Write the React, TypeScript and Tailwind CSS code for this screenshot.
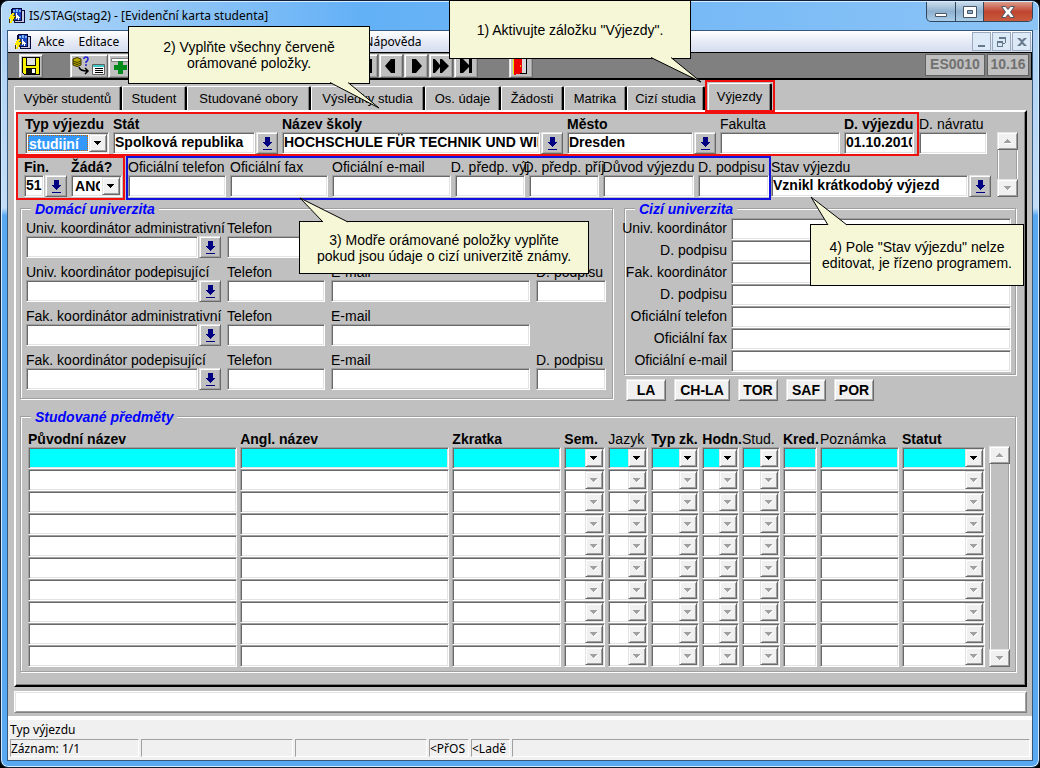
import { ReactNode, useId } from 'react'
import clsx from 'clsx'

const SUNKEN =
    'border border-t-[#a0a0a0] border-l-[#a0a0a0] border-r-white border-b-white shadow-[inset_1px_1px_#696969,inset_-1px_-1px_#e3e3e3]'
const RAISED =
    'border border-t-[#e3e3e3] border-l-[#e3e3e3] border-r-[#696969] border-b-[#696969] shadow-[inset_1px_1px_#ffffff,inset_-1px_-1px_#a0a0a0]'
const GROUP =
    'relative border border-[#a0a0a0] shadow-[inset_1px_1px_#ffffff,1px_1px_#ffffff]'

const AppIcon = () => (
    <svg viewBox="0 0 16 16" className="size-4 shrink-0" shapeRendering="crispEdges">
        <path d="M3 0h10v2h3v13H5v-2H2V1z" fill="#08083c" />
        <path d="M13 3h2v11H6v-1h7z" fill="#c4cce4" />
        <path d="M4 1h8v11H4z" fill="#1c48c0" />
        <path d="M4 2h2v2H4zM7 1h2v3H7zM10 2h2v2h-2z" fill="#7cb4ff" />
        <path d="M7 5v6h1v-1h1v2h1v-2h1V9h-1V8H9V7H8V5z" fill="#ffffff" />
        <path d="M3 5h2v2H4v1h2v1H5v2H4v2H3v2H1v-2h1v-2H0V9h1V7h1z" fill="#ffe800" />
        <path d="M5 5h1v3H5zM0 11h1v4H0zM6 8h1v2H6v1H5v2H4v-2h1V9h1z" fill="#4a3c00" />
    </svg>
)

const DownIcon = () => (
    <svg viewBox="0 0 10 13" className="h-[13px] w-[10px]" shapeRendering="crispEdges">
        <path d="M3 0h5v5h2v1H9v1H8v1H7v1H6v1H5V9H4V8H3V7H2V6H1V5h2z" fill="#000080" />
        <path d="M1 12h9v1H1z" fill="#000080" />
    </svg>
)

const Triangle = ({ up, muted }: { up?: boolean; muted?: boolean }) => (
    <svg viewBox="0 0 8 5" className="h-[5px] w-2" shapeRendering="crispEdges">
        {muted && <path d={up ? 'M1 4h7v1H1z' : 'M4 4h1V3h1V2h1V1h1v1H7v1H6v1H5v1H4z'} fill="#fff" />}
        <path
            d={up ? 'M3 0h1v1h1v1h1v1h1v1H0V3h1V2h1V1h1z' : 'M0 0h7v1H6v1H5v1H4v1H3V3H2V2H1V1H0z'}
            fill={muted ? '#a0a0a0' : '#000'}
        />
    </svg>
)

interface IField {
    label: string
    value?: string
    lov?: boolean
    bold?: boolean
    center?: boolean
    className?: string
}

const Field = ({ label, value = '', lov, bold, center, className }: IField) => {
    const id = useId()
    return (
        <div className={clsx('flex min-w-0 flex-col', center && 'items-center', className)}>
            <label
                htmlFor={id}
                className={clsx('h-4 text-sm leading-4 whitespace-nowrap', bold && 'font-bold')}
            >
                {label}
            </label>
            <div className="flex w-full gap-px">
                <input
                    id={id}
                    defaultValue={value}
                    className={clsx(
                        SUNKEN,
                        'h-[22px] w-full min-w-0 flex-1 bg-white px-px pb-0.5 text-sm font-bold outline-none'
                    )}
                />
                {lov && (
                    <button
                        type="button"
                        aria-label={label}
                        className={clsx(
                            RAISED,
                            'flex h-[22px] w-[22px] shrink-0 items-center justify-center bg-[#c0c0c0]'
                        )}
                    >
                        <DownIcon />
                    </button>
                )}
            </div>
        </div>
    )
}

interface ICombo {
    id?: string
    name: string
    value?: string
    active?: boolean
    selected?: boolean
    disabled?: boolean
}

const Combo = ({ id, name, value = '', active, selected, disabled }: ICombo) => (
    <div className={clsx(SUNKEN, 'flex h-[22px] w-full p-px', active ? 'bg-[#00ffff]' : 'bg-white')}>
        <div className={clsx('flex min-w-0 flex-1', selected && 'p-px')}>
            <select
                id={id}
                aria-label={name}
                disabled={disabled}
                className={clsx(
                    'h-full w-full min-w-0 appearance-none text-sm leading-4 font-bold outline-none',
                    selected
                        ? 'border border-dotted border-[#c06000] bg-[#3399ff] text-white'
                        : 'bg-transparent px-0.5'
                )}
            >
                <option>{value}</option>
            </select>
        </div>
        <span
            className={clsx(
                RAISED,
                'pointer-events-none flex w-[18px] shrink-0 items-center justify-center bg-[#f0f0f0]'
            )}
        >
            <Triangle muted={disabled} />
        </span>
    </div>
)

const ComboField = ({ label, value, selected, className }: IField & { selected?: boolean }) => {
    const id = useId()
    return (
        <div className={className}>
            <label htmlFor={id} className="block h-4 text-sm leading-4 font-bold whitespace-nowrap">
                {label}
            </label>
            <Combo id={id} name={label} value={value} selected={selected} />
        </div>
    )
}

const ScrollBar = ({ className }: { className?: string }) => (
    <div className={clsx('flex w-[21px] shrink-0 flex-col', className)}>
        <button
            type="button"
            aria-label="▲"
            className={clsx(RAISED, 'flex h-[18px] items-center justify-center bg-[#f0f0f0]')}
        >
            <Triangle up muted />
        </button>
        <div className="flex-1 border-x border-l-[#a0a0a0] border-r-white bg-[#c0c0c0] shadow-[inset_1px_0_#ffffff,inset_-1px_0_#a0a0a0]"></div>
        <button
            type="button"
            aria-label="▼"
            className={clsx(RAISED, 'flex h-[18px] items-center justify-center bg-[#f0f0f0]')}
        >
            <Triangle muted />
        </button>
    </div>
)

const Legend = ({ children }: { children: ReactNode }) => (
    <h2 className="absolute -top-2 left-2.5 bg-[#c0c0c0] px-1 text-sm leading-4 font-bold text-[#0000ff] italic">
        {children}
    </h2>
)

interface ICallout {
    className: string
    tail: string
    children: ReactNode
}

const Callout = ({ className, tail, children }: ICallout) => (
    <div
        className={clsx(
            'absolute z-10 flex items-center justify-center border border-black bg-[#f6f7d6] text-center text-sm leading-4',
            className
        )}
    >
        <p className="whitespace-pre-line">{children}</p>
        <svg className="absolute -top-px -left-px overflow-visible" width="1" height="1">
            <polyline points={tail} fill="#f6f7d6" stroke="#000" strokeWidth="1" />
        </svg>
    </div>
)

const ToolButton = ({ name, className, children }: { name: string; className?: string; children: ReactNode }) => (
    <button
        type="button"
        aria-label={name}
        className={clsx(
            RAISED,
            'flex h-6 shrink-0 items-center justify-center bg-[#c0c0c0]',
            className ?? 'w-6'
        )}
    >
        {children}
    </button>
)

const NAV_ICONS = [
    { name: 'První', d: 'M3 2h3v6l6-6h3v14h-3l-6-6v6H3z' },
    { name: 'Předchozí', d: 'M3 9l6-7h4v14H9z' },
    { name: 'Další', d: 'M15 9L9 2H5v14h4z' },
    { name: 'Vpřed', d: 'M1 2h2l5 6V2h2l7 7-7 7H8v-6l-5 6H1z' },
    { name: 'Poslední', d: 'M3 2h3l6 6V2h3v14h-3v-6l-6 6H3z' },
]

const ToolBar = () => (
    <div className="flex h-7 items-start border-t border-r border-b-2 border-black bg-[#808080] pt-px pr-0.5 pl-[11px]">
        <ToolButton name="Uložit">
            <svg viewBox="0 0 18 18" className="size-[18px]" shapeRendering="crispEdges">
                <path d="M0 0h18v18H2l-2-2z" fill="#000" />
                <path d="M1 1h16v16H2l-1-1z" fill="#f8f000" />
                <path d="M4 1h10v8H4z" fill="#000" />
                <path d="M5 1h8v7H5z" fill="#e0e0e0" />
                <path d="M4 11h10v6H4z" fill="#101010" />
                <path d="M10 12h3v4h-3z" fill="#fff" />
            </svg>
        </ToolButton>
        <ToolButton name="Dotaz" className="ml-[27px] w-[38px]">
            <svg viewBox="0 0 34 20" className="h-5 w-[34px] shrink-0">
                <path d="M1 3q4-3 8 0v6q-4 3-8 0z" fill="#b8a800" stroke="#403800" />
                <path d="M1 5q4 3 8 0M1 7q4 3 8 0" fill="none" stroke="#403800" />
                <path d="M12 3q0-2 2-2t2 2-2 3v1M14 8v2" fill="none" stroke="#2020d8" strokeWidth="1.5" />
                <path d="M7 11q1 4 8 4M13 12l3 3-3 3" fill="none" stroke="#000" strokeWidth="1.5" />
                <path d="M20.500 8.500h12v10h-12z" fill="#fff" stroke="#606060" />
                <path d="M21 9h11v2H21z" fill="#40c8c8" />
                <path d="M23 12.500h8M23 14.500h8M23 16.500h8" stroke="#000" />
            </svg>
        </ToolButton>
        <ToolButton name="Vložit" className="w-[38px]">
            <svg viewBox="0 0 34 20" className="h-5 w-[34px] shrink-0">
                <path d="M1.500 2.500h20v3h-20z" fill="#fff" stroke="#808080" />
                <path d="M8 5h5v4h4v5h-4v4H8v-4H4V9h4z" fill="#008a1c" />
            </svg>
        </ToolButton>
        <div className="ml-52 flex gap-px">
            {NAV_ICONS.map((icon) => (
                <ToolButton key={icon.name} name={icon.name}>
                    <svg viewBox="0 0 18 18" className="size-[18px]">
                        <path d={icon.d} fill="#000" />
                    </svg>
                </ToolButton>
            ))}
        </div>
        <ToolButton name="Konec" className="ml-[31px] w-6">
            <svg viewBox="0 0 18 20" className="h-5 w-[18px]" shapeRendering="crispEdges">
                <path d="M2 1h13v17H2z" fill="#000" />
                <path d="M10 2h4v15h-4z" fill="#d8d8d8" />
                <path d="M1 1h1v17H1z" fill="#e8e000" />
                <path d="M2 1l8 1v15l-8 2z" fill="#f00000" />
                <path d="M8 9h1v2H8z" fill="#ffb000" />
            </svg>
        </ToolButton>
        <div className="ml-auto flex gap-0.5 text-sm leading-[16px] font-bold text-[#707070]">
            <span className="h-[22px] w-[60px] border border-[#606060] bg-[#c0c0c0] pt-px text-center">ES0010</span>
            <span className="h-[22px] w-[42px] border border-[#606060] bg-[#c0c0c0] pt-px text-center">10.16</span>
        </div>
    </div>
)

const TitleBar = () => (
    <div className="flex h-7 items-start bg-linear-to-r from-[#b5d8f7] via-[#62b0f6] via-35% to-[#8cc4f6] pr-[5px] pl-[7px]">
        <div className="flex items-center gap-1 self-center">
            <AppIcon />
            <h1 className="text-xs">IS/STAG(stag2) - [Evidenční karta studenta]</h1>
        </div>
        <div className="ml-auto flex h-5 overflow-hidden rounded-b-[5px] border border-t-0 border-[#31475e] bg-linear-to-b from-[#c9dbec] via-[#8fb1cf] via-50% to-[#a9cce8]">
            <button type="button" aria-label="Minimalizovat" className="flex w-[29px] items-center justify-center border-r border-[#31475e]">
                <svg viewBox="0 0 14 12" className="h-3 w-3.5">
                    <path d="M1.500 7.500h11v3h-11z" fill="#fff" stroke="#4a5566" />
                </svg>
            </button>
            <button type="button" aria-label="Obnovit" className="flex w-7 items-center justify-center border-r border-[#31475e]">
                <svg viewBox="0 0 14 12" className="h-3 w-3.5">
                    <path d="M.5.5h13v11H.5z" fill="#fff" stroke="#4a5566" />
                    <path d="M4.500 4.500h5v3h-5z" fill="#8fb1cf" stroke="#4a5566" />
                </svg>
            </button>
            <button
                type="button"
                aria-label="Zavřít"
                className="flex w-12 items-center justify-center bg-linear-to-b from-[#dd9c8c] via-[#c04430] via-50% to-[#c85a3c]"
            >
                <svg viewBox="0 0 14 12" className="h-3 w-3.5">
                    <path d="M.5.5h4L7 3.500 9.500.5h4L9.500 6l4 5.500h-4L7 8.500l-2.500 3h-4L4.500 6z" fill="#fff" stroke="#4a5566" />
                </svg>
            </button>
        </div>
    </div>
)

const MDI_ICONS = ['M4 11h7v2H4z', 'M5 3h7v6H9v1h2V5H6V5H5zM3 7h6v6H3zm1 2v3h4V9z', 'M3 4h3l2 2 2-2h3L9 8l4 4h-3l-2-2-2 2H3l4-4z']

const MenuBar = () => (
    <nav className="flex h-[21px] items-center bg-linear-to-b from-white via-[#e9edf7] via-45% to-[#d4dcee] pr-px pl-[7px] text-xs">
        <AppIcon />
        <a href="#akce" className="ml-[7px]">
            Akce
        </a>
        <a href="#editace" className="ml-3.5">
            Editace
        </a>
        <a href="#napoveda" className="ml-[245px]">
            Nápověda
        </a>
        <div className="ml-auto flex gap-px">
            {MDI_ICONS.map((d) => (
                <button key={d} type="button" aria-label="Okno" className="flex h-[19px] w-[19px] items-center justify-center border border-[#9aa9bd] bg-[#dce9f6]">
                    <svg viewBox="0 0 15 15" className="size-[15px]">
                        <path d={d} fill="#66788c" fillRule="evenodd" />
                    </svg>
                </button>
            ))}
        </div>
    </nav>
)

const TABS = [
    { label: 'Výběr studentů', width: 'w-[108px]' },
    { label: 'Student', width: 'w-[65px]' },
    { label: 'Studované obory', width: 'w-[124px]' },
    { label: 'Výsledky studia', width: 'w-[114px]' },
    { label: 'Os. údaje', width: 'w-[76px]' },
    { label: 'Žádosti', width: 'w-[63px]' },
    { label: 'Matrika', width: 'w-[63px]' },
    { label: 'Cizí studia', width: 'w-[78px]' },
]

const TAB =
    'rounded-t-[2px] border-t border-l border-r-2 border-t-white border-l-white border-r-black bg-[#c0c0c0] text-center text-[13px] shadow-[inset_-1px_0_#808080]'

const Tabs = () => (
    <div className="flex h-[30px] items-end" role="tablist">
        {TABS.map((tab) => (
            <button key={tab.label} type="button" role="tab" className={clsx(TAB, tab.width, 'h-6')}>
                {tab.label}
            </button>
        ))}
        <div className="relative z-[1] -mb-0.5 h-8 w-[70px] border-2 border-[#f01010] p-px pb-0">
            <button type="button" role="tab" aria-selected="true" className={clsx(TAB, 'h-full w-full')}>
                Výjezdy
            </button>
        </div>
    </div>
)

const TripFields = () => (
    <div className="flex pr-[7px]">
        <div className="flex min-w-0 flex-1 flex-col">
            <div className="flex pr-1">
                <div className="flex h-11 min-w-0 flex-1 border-2 border-[#f01010] pt-0.5 pr-[3px] pl-[7px]">
                    <ComboField label="Typ výjezdu" value="studijní" selected className="w-[84px] shrink-0" />
                    <Field label="Stát" value="Spolková republika" lov bold className="ml-1 w-[165px] shrink-0" />
                    <Field
                        label="Název školy"
                        value="HOCHSCHULE FÜR TECHNIK UND WIRTSCHAFT"
                        lov
                        bold
                        className="ml-1 flex-1"
                    />
                    <Field label="Město" value="Dresden" lov bold className="ml-1 w-[149px] shrink-0" />
                    <Field label="Fakulta" className="ml-1 w-[120px] shrink-0" />
                    <Field label="D. výjezdu" value="01.10.2010" bold className="ml-1 w-[70px] shrink-0" />
                </div>
                <div className="w-[68px] shrink-0 pt-1">
                    <Field label="D. návratu" />
                </div>
            </div>
            <div className="flex">
                <div className="flex h-11 w-[109px] shrink-0 gap-1 border-2 border-[#f01010] pt-px pr-px pl-1.5">
                    <Field label="Fin." value="51" lov bold className="w-[44px]" />
                    <ComboField label="Žádá?" value="ANO" className="w-[52px]" />
                </div>
                <div className="ml-px flex h-11 min-w-0 flex-1 gap-1 border-2 border-[#1010e0] pt-px">
                    <Field label="Oficiální telefon" className="w-[98px]" />
                    <Field label="Oficiální fax" className="w-[98px]" />
                    <Field label="Oficiální e-mail" className="flex-1" />
                    <Field label="D. předp. výj" center className="w-[70px]" />
                    <Field label="D. předp. příj" center className="w-[70px]" />
                    <Field label="Důvod výjezdu" center className="w-[91px]" />
                    <Field label="D. podpisu" className="w-[71px]" />
                </div>
                <div className="w-[220px] shrink-0 pt-[3px]">
                    <Field label="Stav výjezdu" value="Vznikl krátkodobý výjezd" lov />
                </div>
            </div>
        </div>
        <ScrollBar className="mt-5 mb-[3px] ml-1.5" />
    </div>
)

const COORDINATORS = [
    { name: 'Univ. koordinátor administrativní', email: false, signed: false },
    { name: 'Univ. koordinátor podepisující', email: true, signed: true },
    { name: 'Fak. koordinátor administrativní', email: true, signed: false },
    { name: 'Fak. koordinátor podepisující', email: true, signed: true },
]

const HomeUniversity = () => (
    <section className={clsx(GROUP, 'flex flex-col gap-1.5 pt-[11px] pr-1.5 pb-2 pl-[5px]')}>
        <Legend>Domácí univerzita</Legend>
        {COORDINATORS.map((row) => (
            <div key={row.name} className="flex gap-1.5">
                <Field label={row.name} lov className="w-[195px]" />
                <Field label="Telefon" className="w-[98px]" />
                <div className="min-w-0 flex-1">{row.email && <Field label="E-mail" />}</div>
                <div className="w-[70px] shrink-0">{row.signed && <Field label="D. podpisu" />}</div>
            </div>
        ))}
    </section>
)

const FOREIGN_FIELDS = [
    'Univ. koordinátor',
    'D. podpisu',
    'Fak. koordinátor',
    'D. podpisu',
    'Oficiální telefon',
    'Oficiální fax',
    'Oficiální e-mail',
]

const ForeignUniversity = () => (
    <section className={clsx(GROUP, 'pt-[9px] pr-1 pb-0.5')}>
        <Legend>Cizí univerzita</Legend>
        {FOREIGN_FIELDS.map((label, i) => (
            <div key={i} className="flex">
                <label
                    htmlFor={`foreign-${i}`}
                    className="flex w-[102px] shrink-0 justify-end text-sm leading-5 whitespace-nowrap"
                >
                    {label}
                </label>
                <input
                    id={`foreign-${i}`}
                    className={clsx(SUNKEN, 'ml-1 h-[22px] min-w-0 flex-1 bg-white px-px text-sm outline-none')}
                />
            </div>
        ))}
    </section>
)

const PRINTS = [
    { label: 'LA', width: 'w-10' },
    { label: 'CH-LA', width: 'w-14' },
    { label: 'TOR', width: 'w-10' },
    { label: 'SAF', width: 'w-10' },
    { label: 'POR', width: 'w-10' },
]

const COLUMNS = [
    { label: 'Původní název', bold: true },
    { label: 'Angl. název', bold: true },
    { label: 'Zkratka', bold: true, width: 'w-[112px]' },
    { label: 'Sem.', bold: true, combo: true, width: 'w-[44px]' },
    { label: 'Jazyk', combo: true, width: 'w-[43px]' },
    { label: 'Typ zk.', bold: true, combo: true, width: 'w-[51px]' },
    { label: 'Hodn.', bold: true, combo: true, width: 'w-[38px]' },
    { label: 'Stud.', combo: true, width: 'w-[41px]' },
    { label: 'Kred.', bold: true, width: 'w-[37px]' },
    { label: 'Poznámka', width: 'w-[82px]' },
    { label: 'Statut', bold: true, combo: true, width: 'w-[86px]' },
]

const ROWS = Array.from({ length: 10 }, (_, i) => i)

const Subjects = () => (
    <section className={clsx(GROUP, 'mt-[15px] flex pt-3.5 pr-[5px] pb-1 pl-[7px]')}>
        <Legend>Studované předměty</Legend>
        <table className="min-w-0 flex-1 table-fixed border-collapse">
            <thead>
                <tr className="h-4">
                    {COLUMNS.map((col) => (
                        <th
                            key={col.label}
                            className={clsx(
                                'p-0 text-left text-sm leading-4 whitespace-nowrap',
                                col.bold ? 'font-bold' : 'font-normal',
                                col.width
                            )}
                        >
                            {col.label}
                        </th>
                    ))}
                </tr>
            </thead>
            <tbody>
                {ROWS.map((row) => (
                    <tr key={row} className="h-[22px]">
                        {COLUMNS.map((col) => (
                            <td key={col.label} className="p-0 pr-[3px]">
                                {col.combo ? (
                                    <Combo name={col.label} active={row === 0} disabled={row > 0} />
                                ) : (
                                    <input
                                        aria-label={col.label}
                                        className={clsx(
                                            SUNKEN,
                                            'block h-[22px] w-full px-px text-sm outline-none',
                                            row === 0 ? 'bg-[#00ffff]' : 'bg-white'
                                        )}
                                    />
                                )}
                            </td>
                        ))}
                    </tr>
                ))}
            </tbody>
        </table>
        <ScrollBar className="mt-[15px] ml-px" />
    </section>
)

const CELL = 'h-[18px] border border-t-[#a0a0a0] border-l-[#a0a0a0] border-r-white border-b-white whitespace-nowrap overflow-hidden leading-[18px]'

const StatusBar = () => (
    <footer className="border-t-4 border-white bg-[#f0f0f0] px-0.5 pb-[3px] font-['Noto_Sans',sans-serif] text-xs">
        <p className="h-[19px] leading-5">Typ výjezdu</p>
        <div className="flex gap-0.5">
            <span className={clsx(CELL, 'w-[129px]')}>Záznam: 1/1</span>
            <span className={clsx(CELL, 'w-[152px]')}></span>
            <span className={clsx(CELL, 'w-[132px]')}></span>
            <span className={clsx(CELL, 'w-[40px]')}>&lt;PřOS</span>
            <span className={clsx(CELL, 'w-[39px]')}>&lt;Ladě</span>
            <span className={clsx(CELL, 'flex-1')}></span>
        </div>
    </footer>
)

const App = () => (
    <div className="bg-black font-['Liberation_Sans',Arial,sans-serif] text-black">
        <div className="relative flex min-h-screen flex-col rounded-lg border border-[#102038] bg-linear-to-b from-[#a9cff4] via-[#c4def8] via-27% to-[#5aa8f0] to-28% px-1.5 pb-1.5 shadow-[inset_0_0_0_1px_#d8ecff]">
            <div className="-mx-[5px] mt-px overflow-hidden rounded-t-md font-['Noto_Sans',sans-serif]">
                <TitleBar />
            </div>
            <div className="flex flex-1 flex-col border border-[#35587c] bg-[#c0c0c0]">
                <div className="font-['Noto_Sans',sans-serif]">
                    <MenuBar />
                </div>
                <ToolBar />
                <main className="flex-1 pr-[5px] pb-[3px] pl-1.5">
                    <Tabs />
                    <div className="border-2 border-t-white border-r-black border-b-black border-l-white pb-[13px] shadow-[inset_-1px_-1px_#808080]">
                        <TripFields />
                        <div className="pt-2 pr-[9px] pl-1">
                            <div className="flex items-start gap-[11px]">
                                <div className="min-w-0 flex-[593]">
                                    <HomeUniversity />
                                </div>
                                <div className="min-w-0 flex-[392]">
                                    <ForeignUniversity />
                                    <div className="mt-1 flex gap-2 pl-0.5">
                                        {PRINTS.map((print) => (
                                            <button
                                                key={print.label}
                                                type="button"
                                                className={clsx(RAISED, print.width, 'h-[22px] bg-[#f0f0f0] text-sm leading-4 font-bold')}
                                            >
                                                {print.label}
                                            </button>
                                        ))}
                                    </div>
                                </div>
                            </div>
                            <Subjects />
                        </div>
                    </div>
                    <input
                        aria-label="Zpráva"
                        className="mt-1 block h-[22px] w-full border border-t-white border-r-[#808080] border-b-[#808080] border-l-white bg-white px-1 text-sm shadow-[inset_1px_1px_#e3e3e3,inset_-1px_-1px_#a0a0a0] outline-none"
                    />
                </main>
                <StatusBar />
            </div>

            <Callout className="-top-px left-[448px] h-[59px] w-[242px]" tail="202,57.5 252,82 222,57.5">
                1) Aktivujte záložku "Výjezdy".
            </Callout>
            <Callout className="top-[25px] left-[127px] h-[58px] w-[242px]" tail="202,56.5 251,82 220,56.5">
                {'2) Vyplňte všechny červeně\norámované položky.'}
            </Callout>
            <Callout className="top-[220px] left-[298px] h-[53px] w-[290px]" tail="24,1 1,-23 49,1">
                {'3) Modře orámované položky vyplňte\npokud jsou údaje o cizí univerzitě známy.'}
            </Callout>
            <Callout className="top-[223px] left-[809px] h-[62px] w-[214px]" tail="18,1 1,-27 37,1">
                {'4) Pole "Stav výjezdu" nelze\neditovat, je řízeno programem.'}
            </Callout>
        </div>
    </div>
)

export default App
